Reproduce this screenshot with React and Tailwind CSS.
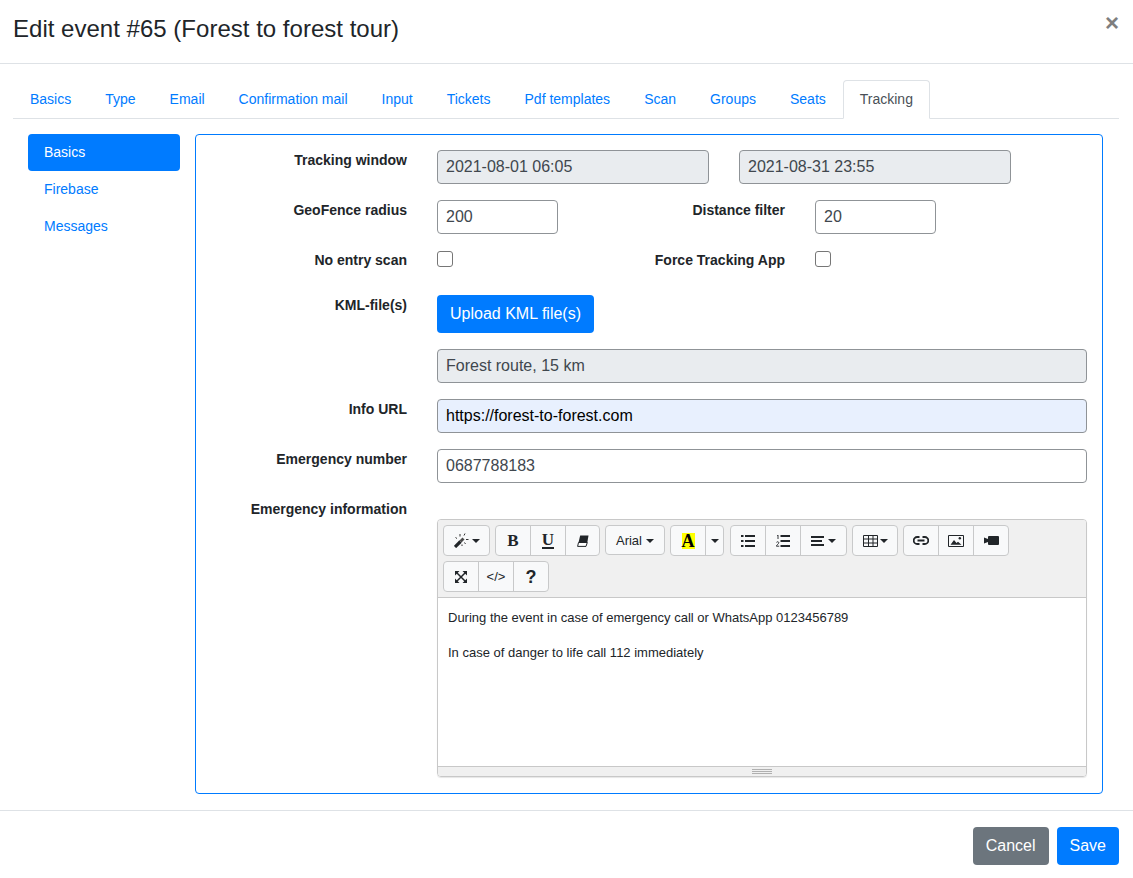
import React from "react";

const tabs = ["Basics", "Type", "Email", "Confirmation mail", "Input", "Tickets", "Pdf templates", "Scan", "Groups", "Seats"];

const Caret = ({ className = "ml-1" }) => <span className={"inline-block border-x-[4px] border-t-[4px] border-x-transparent border-t-[#212529] " + className}></span>;

const ToolBtn = ({ children, className = "" }) => (
  <button className={"flex h-full items-center justify-center border-l border-[#c8c9ca] first:border-l-0 " + className}>{children}</button>
);

const ToolGroup = ({ children, className = "h-[31px]" }) => (
  <div className={"flex overflow-hidden rounded-[4px] border border-[#c8c9ca] bg-[#f8f9fa] " + className}>{children}</div>
);

const WandIcon = () => (
  <svg width="15" height="15" viewBox="0 0 15 15" fill="none" stroke="#212529">
    <path d="M1 14 6.500 8.500" strokeWidth="3.200" />
    <path d="M6.500 8.500 9.500 5.500" strokeWidth="2.800" stroke="#4a4a4a" />
    <path d="M6 1v2.500M1.500 4.500l1.500 1M11 .5 10 2.500M12 6.500h2.500M10.500 9.500l1 1.500M8 11.500v1.500" strokeWidth="1" stroke="#333" />
  </svg>
);

const EraserIcon = () => (
  <svg width="12" height="12" viewBox="0 0 12 12">
    <path d="M3.200.5H11.500L10.300 7.500H1.500z" fill="#212529" />
    <path d="M1.500 7.500H10.300L9 11.400H.6z" fill="#fff" stroke="#212529" />
  </svg>
);

const UlIcon = () => (
  <svg width="14" height="12" viewBox="0 0 14 12" fill="#212529">
    <path d="M0 0h2.500v2H0zM4 0h10v2H4zM0 5h2.500v2H0zM4 5h10v2H4zM0 10h2.500v2H0zM4 10h10v2H4z" />
  </svg>
);

const OlIcon = () => (
  <svg width="14" height="12" viewBox="0 0 14 12" fill="#212529">
    <path d="M4.500 0H14v2H4.500zM4.500 5H14v2H4.500zM4.500 10H14v2H4.500z" />
    <path d="M1 .5 2 0v4" fill="none" stroke="#212529" strokeWidth=".9" />
    <path d="M.3 7.500c.4-1 2.500-1 2.500.2 0 1-1.700 1.800-2.500 3.500h2.900" fill="none" stroke="#212529" strokeWidth=".9" />
  </svg>
);

const AlignIcon = () => (
  <svg width="13" height="12" viewBox="0 0 13 12" fill="#212529">
    <path d="M0 1h13v2H0zM0 5h11v2H0zM0 9h13v2H0z" />
  </svg>
);

const TableIcon = () => (
  <svg width="15" height="12" viewBox="0 0 15 12" fill="none" stroke="#212529" strokeWidth="1">
    <path d="M.5.5h14v11H.5zM.5 4h14M.5 8h14M5.500.5v11M10 .5v11" />
  </svg>
);

const LinkIcon = () => (
  <svg width="16" height="9" viewBox="0 0 16 9" fill="none" stroke="#212529" strokeWidth="1.800">
    <path d="M6.500 1H4.200a3.300 3.300 0 0 0 0 7h2.300M9.500 1h2.300a3.300 3.300 0 0 1 0 7H9.500" />
    <path d="M4.500 4.500h7" />
  </svg>
);

const ImageIcon = () => (
  <svg width="16" height="12" viewBox="0 0 16 12" fill="none">
    <path d="M.5.5h15v11H.5z" stroke="#212529" />
    <path d="M2.500 9.800 6 5l2.500 3 1.500-1.300 3.500 3.100z" fill="#212529" />
    <circle cx="11.800" cy="3.300" r="1.200" fill="#212529" />
  </svg>
);

const VideoIcon = () => (
  <svg width="15" height="9" viewBox="0 0 15 9" fill="#212529">
    <path d="M0 1.500 4 3v3L0 7.500z" />
    <rect x="4" y="0" width="11" height="9" rx="1" />
  </svg>
);

const ExpandIcon = () => (
  <svg width="12" height="12" viewBox="0 0 12 12" fill="#212529" stroke="none">
    <path d="M0 0h4.500L0 4.500zM12 0H7.500L12 4.500zM0 12h4.500L0 7.500zM12 12H7.500L12 7.500z" />
    <path d="M1.500 1.500l9 9M10.500 1.500l-9 9" stroke="#212529" strokeWidth="1.500" />
  </svg>
);

const Field = ({ value, tone = "plain", className = "" }) => {
  const tones = {
    plain: "bg-white text-[#40474e]",
    disabled: "bg-[#e9ecef] text-[#40474e]",
    autofill: "bg-[#e8f0fe] text-black",
  };
  return (
    <div className={"flex h-[34px] items-center rounded-[4px] border border-[#8f9397] px-[8px] text-[16px] " + tones[tone] + " " + className}>
      {value}
    </div>
  );
};

const Row = ({ label, children, className = "" }) => (
  <div className={"flex " + className}>
    <label className="w-[211px] shrink-0 text-right text-[14px] leading-[21px] font-bold text-[#212529]">{label}</label>
    <div className="ml-[30px] flex-1">{children}</div>
  </div>
);

const Check = () => <span className="mt-[1px] block size-4 rounded-[3px] border border-[#767676] bg-white"></span>;

export default function App() {
  return (
    <div className="min-h-[878px] bg-white font-['Liberation_Sans',Arial,sans-serif] text-[#212529]">
      <div className="flex h-16 items-start justify-between border-b border-[#dee2e6] pt-[13px] pr-[14px] pl-[13px]">
        <h4 className="text-[24px] leading-[32px] tracking-[0.015px] text-[#212529]">Edit event #65 (Forest to forest tour)</h4>
        <span className="text-[24px] leading-[20px] font-bold text-[#7f7f7f]">×</span>
      </div>

      <div className="pt-4 pr-[14px] pl-[13px]">
        <div className="flex h-[39px] border-b border-[#dee2e6] text-[14px] text-[#007bff]">
          {tabs.map(t => (
            <a key={t} className="px-[17px] pt-px leading-[37px]">{t}</a>
          ))}
          <a className="h-[39px] rounded-t-[4px] border border-[#dee2e6] border-b-white bg-white px-4 leading-[37px] text-[#495057]">Tracking</a>
        </div>

        <div className="flex pt-[15px] pr-[16px] pl-[15px]">
          <div className="w-[152px] shrink-0 text-[14px] text-[#007bff]">
            <div className="h-[37px] rounded-[4px] bg-[#007bff] px-4 leading-[37px] text-white">Basics</div>
            <div className="h-[37px] px-4 leading-[37px]">Firebase</div>
            <div className="h-[37px] px-4 leading-[37px]">Messages</div>
          </div>

          <div className="ml-[15px] flex h-[660px] flex-1 flex-col gap-4 rounded-[4px] border border-[#007bff] pt-[15px] pr-[15px]">
            <Row label="Tracking window">
              <div className="flex gap-[30px]">
                <Field tone="disabled" className="w-[272px]" value="2021-08-01 06:05" />
                <Field tone="disabled" className="w-[272px]" value="2021-08-31 23:55" />
              </div>
            </Row>
            <Row label="GeoFence radius">
              <div className="flex">
                <Field className="w-[121px]" value="200" />
                <label className="w-[227px] text-right text-[14px] leading-[21px] font-bold">Distance filter</label>
                <Field className="ml-[30px] w-[121px]" value="20" />
              </div>
            </Row>
            <Row label="No entry scan">
              <div className="flex">
                <Check />
                <label className="w-[332px] text-right text-[14px] leading-[21px] font-bold">Force Tracking App</label>
                <div className="ml-[30px]"><Check /></div>
              </div>
            </Row>
            <Row label="KML-file(s)" className="mt-[8px]">
              <button className="h-[38px] rounded-[4px] bg-[#007bff] px-[13px] text-[16px] text-white">Upload KML file(s)</button>
            </Row>
            <Row label="">
              <Field tone="disabled" value="Forest route, 15 km" />
            </Row>
            <Row label="Info URL">
              <Field tone="autofill" value="https://forest-to-forest.com" />
            </Row>
            <Row label="Emergency number">
              <Field value="0687788183" />
            </Row>
            <Row label="Emergency information">
              <div className="mt-[20px] overflow-hidden rounded-[4px] border border-[#c8c8c8] shadow-[0_1px_1px_rgba(0,0,0,0.1)]">
                <div className="flex flex-col gap-[5px] border-b border-[#c8c8c8] bg-[#f0f0f0] px-[5px] pt-[5px] pb-[5px]">
                  <div className="flex h-[31px] items-start gap-[5px] text-[#212529]">
                    <ToolGroup>
                      <ToolBtn className="w-[45px]"><WandIcon /><Caret className="ml-[3px]" /></ToolBtn>
                    </ToolGroup>
                    <ToolGroup>
                      <ToolBtn className="w-[34px] font-['Liberation_Serif',serif] text-[17px] font-bold">B</ToolBtn>
                      <ToolBtn className="w-[35px] font-['Liberation_Serif',serif] text-[17px] font-bold">
                        <span className="border-b-2 border-[#212529] leading-[14px]">U</span>
                      </ToolBtn>
                      <ToolBtn className="w-[34px]"><EraserIcon /></ToolBtn>
                    </ToolGroup>
                    <ToolGroup className="h-[30px]">
                      <ToolBtn className="w-[58px] pt-px text-[13px]">Arial<Caret /></ToolBtn>
                    </ToolGroup>
                    <ToolGroup>
                      <ToolBtn className="w-[34px]">
                        <span className="w-[13px] bg-[#ffff00] text-center font-['Liberation_Serif',serif] text-[18px] leading-[16px] font-bold text-black">A</span>
                      </ToolBtn>
                      <ToolBtn className="w-[18px]"><Caret className="ml-0" /></ToolBtn>
                    </ToolGroup>
                    <div className="ml-px">
                      <ToolGroup>
                        <ToolBtn className="w-[34px]"><UlIcon /></ToolBtn>
                        <ToolBtn className="w-[35px]"><OlIcon /></ToolBtn>
                        <ToolBtn className="w-[46px]"><AlignIcon /><Caret /></ToolBtn>
                      </ToolGroup>
                    </div>
                    <ToolGroup>
                      <ToolBtn className="w-[44px]"><TableIcon /><Caret className="ml-[2px]" /></ToolBtn>
                    </ToolGroup>
                    <ToolGroup>
                      <ToolBtn className="w-[34px]"><LinkIcon /></ToolBtn>
                      <ToolBtn className="w-[35px]"><ImageIcon /></ToolBtn>
                      <ToolBtn className="w-[35px]"><VideoIcon /></ToolBtn>
                    </ToolGroup>
                  </div>
                  <div className="flex h-[31px]">
                    <ToolGroup>
                      <ToolBtn className="w-[34px]"><ExpandIcon /></ToolBtn>
                      <ToolBtn className="w-[35px] text-[13px]">&lt;/&gt;</ToolBtn>
                      <ToolBtn className="w-[35px] pt-px text-[18px] font-bold">?</ToolBtn>
                    </ToolGroup>
                  </div>
                </div>
                <div className="h-[168px] bg-white px-[10px] pt-[10px] text-[13px] leading-[20px] text-[#212529]">
                  <p className="mb-[15px]">During the event in case of emergency call or WhatsApp 0123456789</p>
                  <p>In case of danger to life call 112 immediately</p>
                </div>
                <div className="flex h-[10px] flex-col items-center justify-center gap-px border-t border-[#c8c8c8] bg-[#f0f0f0]">
                  <span className="h-px w-[20px] bg-[#b0b0b0]"></span>
                  <span className="h-px w-[20px] bg-[#b0b0b0]"></span>
                  <span className="h-px w-[20px] bg-[#b0b0b0]"></span>
                </div>
              </div>
            </Row>
          </div>
        </div>
      </div>

      <div className="mt-4 flex h-[68px] items-start justify-end gap-2 border-t border-[#dee2e6] pt-4 pr-[14px]">
        <button className="h-[38px] rounded-[4px] bg-[#6c757d] px-[13px] text-[16px] text-white">Cancel</button>
        <button className="h-[38px] rounded-[4px] bg-[#007bff] px-[13px] text-[16px] text-white">Save</button>
      </div>
    </div>
  );
}
